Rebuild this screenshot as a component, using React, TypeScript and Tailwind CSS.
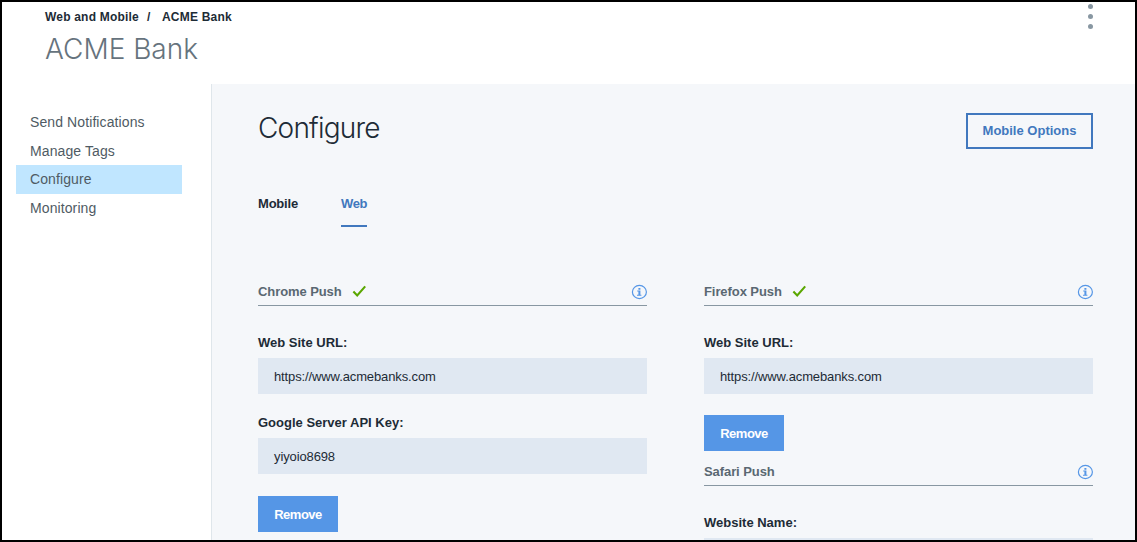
import type { ReactNode } from 'react';

const navItems = ['Send Notifications', 'Manage Tags', 'Configure', 'Monitoring'];

function CheckIcon() {
  return (
    <svg className="h-[14px] w-[16px]" viewBox="0 0 16 14" fill="none">
      <path d="M1.4 6.6 L5.2 10.5 L13.2 1.4" stroke="#5aa700" strokeWidth="2.1" />
    </svg>
  );
}

function InfoIcon() {
  return (
    <svg className="ml-auto h-[16px] w-[16px]" viewBox="0 0 16 16" fill="none">
      <ellipse cx="8.4" cy="8" rx="7" ry="6.6" stroke="#5596e6" strokeWidth="1.2" />
      <path d="M7.4 4h2v1.7h-2zM6.2 6.6h3.2v4.2h1v1H6v-1h1.4V7.6H6.2z" fill="#5596e6" />
    </svg>
  );
}

function SectionHeader({ title, checked = false }: { title: string; checked?: boolean }) {
  return (
    <div className="flex h-7 items-center gap-[10px] border-b border-[#8897a2]">
      <h2 className="text-[13px] font-bold tracking-[-0.08px] text-[#5a6872]">{title}</h2>
      {checked && <CheckIcon />}
      <InfoIcon />
    </div>
  );
}

function Label({ children }: { children: ReactNode }) {
  return <div className="h-4 text-[13px] leading-[17px] font-bold text-[#1d2b36]">{children}</div>;
}

function Field({ value }: { value: string }) {
  return (
    <div className="mt-2 flex h-9 shrink-0 items-center bg-[#e0e8f2] px-4 pt-px text-[13px] tracking-[-0.12px] text-[#1d2b36]">
      {value}
    </div>
  );
}

function RemoveButton() {
  return (
    <button className="h-9 w-20 shrink-0 bg-[#5596e6] pt-px text-[13px] font-bold tracking-[-0.5px] text-white">
      Remove
    </button>
  );
}

export default function App() {
  return (
    <div className="flex h-[542px] w-[1137px] flex-col overflow-hidden border-2 border-black bg-white font-['Liberation_Sans',Arial,sans-serif]">
      <header className="flex h-[82px] shrink-0 justify-between pr-[42px] pl-[43px]">
        <div>
          <div className="mt-[7px] flex h-4 items-center text-[12px] font-bold text-[#1d2b36]">
            <span className="w-[102px] tracking-[0.2px]">Web and Mobile</span>
            <span className="w-[15px]">/</span>
            <span className="tracking-[0.2px]">ACME Bank</span>
          </div>
          <h1 className="mt-[6px] font-['Inter','Liberation_Sans',sans-serif] text-[28px] leading-9 font-light text-[#66737d]">
            ACME Bank
          </h1>
        </div>
        <div className="mt-[2px] flex flex-col gap-[5px]">
          <span className="size-[5px] rounded-full bg-[#8897a2]" />
          <span className="size-[5px] rounded-full bg-[#8897a2]" />
          <span className="size-[5px] rounded-full bg-[#8897a2]" />
        </div>
      </header>
      <div className="flex min-h-0 flex-1">
        <nav className="w-[210px] shrink-0 border-r border-[#dfe6eb] pt-6 pr-[29px] pl-[14px]">
          {navItems.map((item) => (
            <div
              key={item}
              className={
                item === 'Configure'
                  ? 'flex h-[29px] items-center bg-[#c0e6ff] pl-[14px] text-[14px] tracking-[0.1px] text-[#4f5b64]'
                  : 'flex h-[28.7px] items-center pl-[14px] text-[14px] tracking-[0.1px] text-[#4f5b64]'
              }
            >
              {item}
            </div>
          ))}
        </nav>
        <main className="flex-1 bg-[#f5f7fa] pr-[42px] pl-[46px]">
          <div className="flex justify-between pt-[29px]">
            <h1 className="-mt-[3px] font-['Inter','Liberation_Sans',sans-serif] text-[28px] leading-9 font-light tracking-[-0.8px] text-[#1d2b36]">
              Configure
            </h1>
            <button className="h-9 w-[127px] border-2 border-[#4178be] text-[13px] font-bold text-[#4178be]">
              Mobile Options
            </button>
          </div>
          <div className="mt-[46px] flex gap-[43px] text-[13px] font-bold">
            <div className="h-8 w-10 leading-[17px] tracking-[-0.2px] text-[#1d2b36]">Mobile</div>
            <div className="h-8 w-[26px] border-b-2 border-[#4178be] leading-[17px] tracking-[-0.4px] text-[#4178be]">Web</div>
          </div>
          <div className="mt-[51px] grid grid-cols-2 gap-[57px]">
            <section>
              <SectionHeader title="Chrome Push" checked />
              <div className="mt-7">
                <Label>Web Site URL:</Label>
                <Field value="https://www.acmebanks.com" />
              </div>
              <div className="mt-5">
                <Label>Google Server API Key:</Label>
                <Field value="yiyoio8698" />
              </div>
              <div className="mt-[22px] flex">
                <RemoveButton />
              </div>
            </section>
            <section>
              <SectionHeader title="Firefox Push" checked />
              <div className="mt-7">
                <Label>Web Site URL:</Label>
                <Field value="https://www.acmebanks.com" />
              </div>
              <div className="mt-[21px] mb-[7px] flex">
                <RemoveButton />
              </div>
              <SectionHeader title="Safari Push" />
              <div className="mt-7">
                <Label>Website Name:</Label>
                <Field value="" />
              </div>
            </section>
          </div>
        </main>
      </div>
    </div>
  );
}
